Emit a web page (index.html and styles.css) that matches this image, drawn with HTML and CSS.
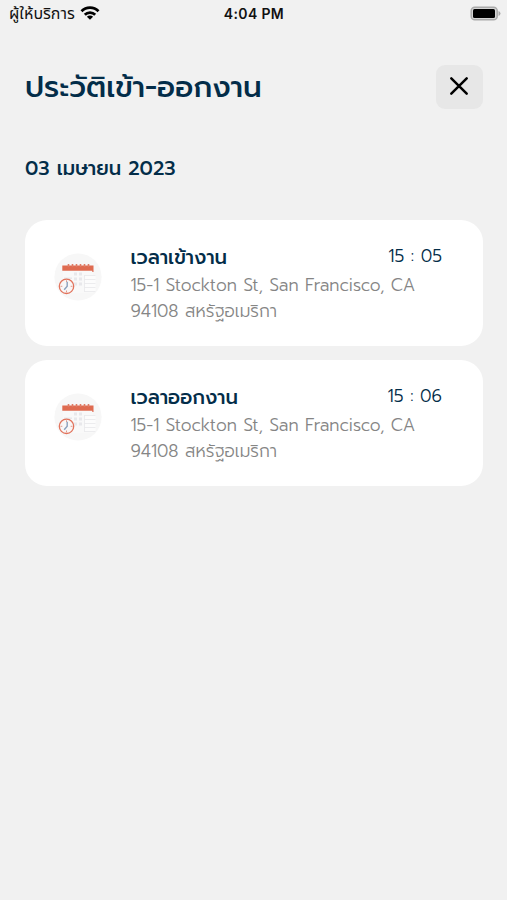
FILE: index.html
```html
<!DOCTYPE html>
<html lang="th">
<head>
<meta charset="utf-8">
<meta name="viewport" content="width=device-width, initial-scale=1">
<title>ประวัติเข้า-ออกงาน</title>
<link rel="stylesheet" href="styles.css">
</head>
<body>
<svg width="0" height="0" class="defs" aria-hidden="true">
  <symbol id="calendar" viewBox="0 0 48 48">
    <circle cx="24" cy="24" r="23.600" fill="#f7f7f7"/>
    <path d="M9 17h30v23H9z" fill="#f9f9f9"/>
    <path d="M8.300 12.600h31.200v6.400h-1.200v-1.300h-30z" fill="#df6b50"/>
    <path d="M14.500 11v3M18.500 11v3M22.500 11v3M26.500 11v3M30.500 11v3M34.500 11v3" stroke="#df7b64" stroke-width="1.600"/>
    <path d="M20 19.500h3v3h-3zM25 19.500h3v3h-3zM20 24.500h3v3h-3zM25 24.500h3v3h-3zM20 29.500h3v3h-3zM25 29.500h3v3h-3zM10 24.500h8v1.500h-8z" fill="#e8e8eb"/>
    <path d="M30.500 22h11v17h-11z" fill="#fcfcfc"/>
    <path d="M30.500 22.500h11M30.500 26.500h11M30.500 30.500h11M30.500 34.500h11M30.500 38.500h11M30.500 22v17" fill="none" stroke="#e5e5e8" stroke-width=".7"/>
    <circle cx="12.500" cy="33.300" r="7.200" fill="#f9f7f7" stroke="#e2735c" stroke-width="1.300"/>
    <path d="M12.500 27.300v1.800M12.500 37.500v1.800M6.500 33.300h1.800M16.700 33.300h1.800" stroke="#dc8f7f" stroke-width=".9"/>
    <path d="M13.200 28.800v4.500l-3 3.500" fill="none" stroke="#8ba1bd" stroke-width="1.400"/>
  </symbol>
</svg>
<div class="status">
  <div class="carrier"><span class="carrier-name">ผู้ให้บริการ</span>
    <svg class="wifi" viewBox="0 0 20 14"><g fill="none" stroke="#000" stroke-width="2.800"><path d="M1.500 5.200a12 12 0 0 1 17 0"/><path d="M4.800 8.700a7.400 7.400 0 0 1 10.400 0"/></g><path d="M10 13.800l-3.100-3.100a4.400 4.400 0 0 1 6.200 0z"/></svg>
  </div>
  <div class="clock">4:04 PM</div>
  <svg class="battery" viewBox="0 0 31 15"><rect x="1.200" y="1.200" width="26" height="12.600" rx="3.600" fill="#d5d5d5" stroke="#aaa" stroke-width="1.500"/><rect x="3" y="3" width="22" height="9" rx="1.500"/><path d="M28.500 5v5q2-.8 2-2.500t-2-2.500z" fill="#aaa"/></svg>
</div>
<header class="header">
  <h1 class="title">ประวัติเข้า-ออกงาน</h1>
  <button class="close" aria-label="ปิด"><svg viewBox="0 0 20 20"><path d="M2.300 2.300l15.400 15.400M17.700 2.300L2.300 17.700" stroke="#000" stroke-width="2.500" stroke-linecap="round"/></svg></button>
</header>
<h2 class="date">03 เมษายน 2023</h2>
<main class="list">
  <article class="card">
    <svg class="icon"><use href="#calendar"/></svg>
    <div class="info">
      <div class="row"><h3 class="name">เวลาเข้างาน</h3><time class="time">15 : 05</time></div>
      <p class="address">15-1 Stockton St, San Francisco, CA<br>94108 สหรัฐอเมริกา</p>
    </div>
  </article>
  <article class="card">
    <svg class="icon"><use href="#calendar"/></svg>
    <div class="info">
      <div class="row"><h3 class="name">เวลาออกงาน</h3><time class="time">15 : 06</time></div>
      <p class="address">15-1 Stockton St, San Francisco, CA<br>94108 สหรัฐอเมริกา</p>
    </div>
  </article>
</main>
</body>
</html>
```
FILE: styles.css
```css
* { box-sizing: border-box; margin: 0; }
body { min-height: 900px; background: #f1f1f1; color: #032d49; font-family: Prompt, Lato, "Noto Sans Thai", "Noto Sans", sans-serif; }
.defs { display: none; }
.status { display: grid; grid-template-columns: 1fr auto 1fr; align-items: center; height: 28px; padding: 0 6px 2px 9px; color: #111; font-family: Inter, "Noto Sans Thai", sans-serif; font-size: 14px; white-space: nowrap; }
.carrier { display: flex; align-items: center; gap: 5px; }
.carrier-name { width: 66px; font-size: 16px; line-height: 24px; }
.wifi { width: 20px; height: 14px; }
.clock { position: relative; left: -1px; font-weight: 600; letter-spacing: .35px; }
.battery { justify-self: end; width: 31px; height: 15px; }
.header { display: flex; align-items: center; justify-content: space-between; height: 44px; margin: 37px 24px 0 25px; }
.title { font-size: 29.300px; font-weight: 500; line-height: 44px; white-space: nowrap; }
.close { display: grid; place-items: center; width: 47px; height: 44px; padding: 0 1px 2px 0; border: 0; border-radius: 9px; background: #e7e7e7; }
.close svg { width: 20px; height: 20px; }
.date { margin: 45px 25px 0; height: 30px; line-height: 30px; font-size: 19.500px; font-weight: 500; white-space: nowrap; }
.list { display: grid; gap: 14px; margin: 36px 24px 0 25px; }
.card { display: flex; height: 126px; padding: 24px 41px 0 28.500px; border-radius: 22px; background: #fff; }
.icon { flex: none; width: 48px; height: 48px; margin-top: 9px; }
.info { flex: 1; margin-left: 29px; white-space: nowrap; }
.row { display: flex; justify-content: space-between; height: 28px; }
.name { font-size: 19.600px; font-weight: 500; line-height: 28px; }
.time { font-size: 17.400px; font-weight: 300; line-height: 24px; }
.address { font-size: 17.150px; font-weight: 300; line-height: 26px; color: #858585; }
.card + .card .row, .card + .card .address { position: relative; top: -.5px; }
```
